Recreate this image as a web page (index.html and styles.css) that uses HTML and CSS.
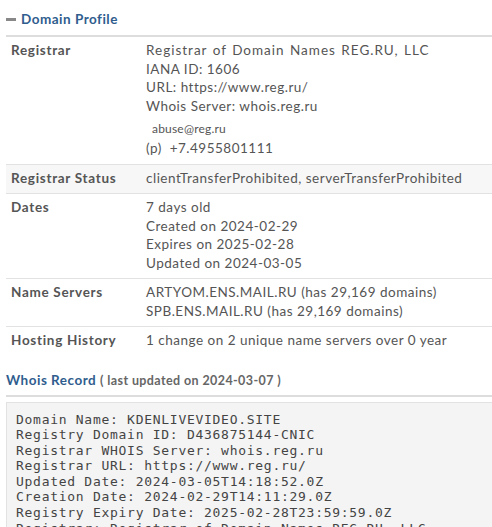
FILE: index.html
```html
<!DOCTYPE html>
<html>
<head>
<meta charset="utf-8">
<link rel="stylesheet" href="styles.css">
</head>
<body>
<div class="page">
  <h2 class="section-title"><span class="dash"></span>Domain Profile</h2>
  <table class="profile">
    <tr>
      <th>Registrar</th>
      <td>
        <div class="wide">Registrar of Domain Names REG.RU, LLC</div>
        <div>IANA ID: 1606</div>
        <div>URL: https://www.reg.ru/</div>
        <div>Whois Server: whois.reg.ru</div>
        <div class="email">abuse@reg.ru</div>
        <div>(p)&nbsp; +7.4955801111</div>
      </td>
    </tr>
    <tr class="alt">
      <th>Registrar Status</th>
      <td>clientTransferProhibited, serverTransferProhibited</td>
    </tr>
    <tr>
      <th>Dates</th>
      <td>
        <div>7 days old</div>
        <div>Created on 2024-02-29</div>
        <div>Expires on 2025-02-28</div>
        <div>Updated on 2024-03-05</div>
      </td>
    </tr>
    <tr>
      <th>Name Servers</th>
      <td>
        <div>ARTYOM.ENS.MAIL.RU (has 29,169 domains)</div>
        <div>SPB.ENS.MAIL.RU (has 29,169 domains)</div>
      </td>
    </tr>
    <tr class="last">
      <th>Hosting History</th>
      <td>1 change on 2 unique name servers over 0 year</td>
    </tr>
  </table>

  <h2 class="section-title whois">Whois Record <span class="updated">( last updated on 2024-03-07 )</span></h2>
  <pre class="raw">Domain Name: KDENLIVEVIDEO.SITE
Registry Domain ID: D436875144-CNIC
Registrar WHOIS Server: whois.reg.ru
Registrar URL: https://www.reg.ru/
Updated Date: 2024-03-05T14:18:52.0Z
Creation Date: 2024-02-29T14:11:29.0Z
Registry Expiry Date: 2025-02-28T23:59:59.0Z
Registrar: Registrar of Domain Names REG.RU, LLC</pre>
</div>
</body>
</html>
```

FILE: styles.css
```css
html, body {
  margin: 0;
  padding: 0;
  background: #fff;
}
body {
  font-family: Lato, "Open Sans", sans-serif;
  font-size: 13.5px;
  color: #555;
  letter-spacing: 0.5px;
  overflow: hidden;
  height: 527px;
}
.page {
  padding: 10px 0 0 6px;
  width: 486px;
}
.section-title {
  margin: 0;
  font-size: 13.5px;
  font-weight: 700;
  letter-spacing: 0.5px;
  color: #2f5d8e;
  line-height: 18px;
  padding-bottom: 7px;
  border-bottom: 2px solid #ddd;
  display: flex;
  align-items: center;
  gap: 5px;
}
.dash {
  display: inline-block;
  width: 10px;
  height: 3px;
  background: #888;
}
.profile {
  width: 100%;
  border-collapse: collapse;
}
.profile th,
.profile td {
  vertical-align: top;
  text-align: left;
  line-height: 18.5px;
  padding: 4px 5px 6px 5px;
  border-bottom: 1px solid #e2e2e2;
}
.profile th {
  width: 125px;
  font-weight: 700;
  color: #555;
  letter-spacing: 0.7px;
}
.profile tr.alt th,
.profile tr.alt td {
  background: #f7f7f7;
}
.profile tr.last th,
.profile tr.last td {
  border-bottom: none;
}
.wide {
  letter-spacing: 1px;
  word-spacing: 1px;
}
.email {
  font-size: 12px;
  letter-spacing: 0.2px;
  padding-left: 6px;
  line-height: 22px;
  margin-top: 2px;
  position: relative;
  top: 1px;
}
.whois {
  display: block;
  margin-top: 15px;
  padding-bottom: 5px;
}
.updated {
  font-size: 12.5px;
  color: #666;
  font-weight: 700;
  letter-spacing: 0.4px;
}
.raw {
  margin: 5px 0 0 0;
  background: #f4f4f4;
  border: 1px solid #e2e2e2;
  padding: 9px 9px 7px;
  font-family: "DejaVu Sans Mono", monospace;
  font-size: 13px;
  letter-spacing: 0.72px;
  line-height: 15.6px;
  color: #444;
  width: 600px;
}
```
